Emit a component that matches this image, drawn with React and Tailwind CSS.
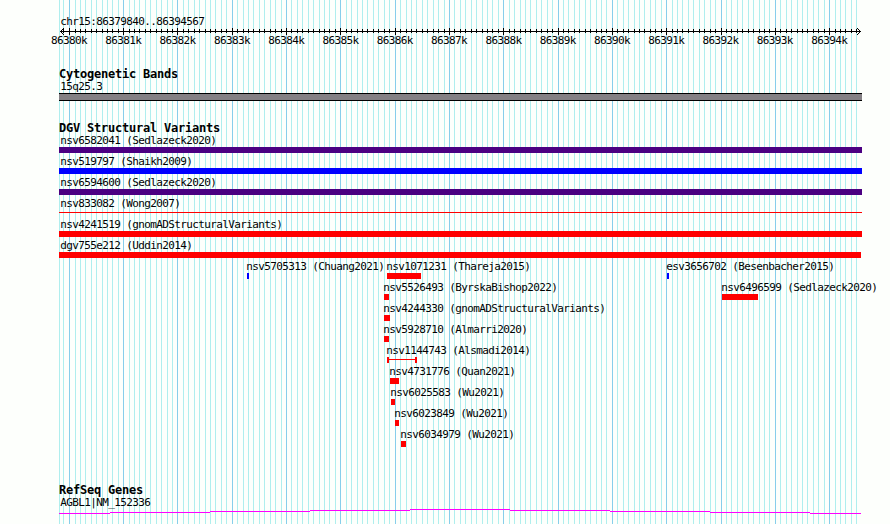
import React from 'react';

const LEFT = 59;
const ORIGIN = 69.29;
const STEP = 5.431;

// integer pixel column of the i-th 100bp tick, 1 and 6 round up
const tickX = (i) => Math.floor(ORIGIN + STEP * i) + (i === 1 || i === 6 ? 1 : 0);

const ticks = [{ x: 59, major: false }];
for (let i = -1; i <= 145; i++) {
    ticks.push({ x: tickX(i), major: i % 10 === 0 });
}

const scaleLabels = Array.from({ length: 15 }, (_, i) => `${86380 + i}k`);

const fullWidth = [
    { name: 'nsv6582041 (Sedlazeck2020)', bar: 'h-1.5 w-[803px] bg-[#4b0082]' },
    { name: 'nsv519797 (Shaikh2009)', bar: 'h-1.5 w-[803px] bg-[#0000ff]' },
    { name: 'nsv6594600 (Sedlazeck2020)', bar: 'h-1.5 w-[803px] bg-[#4b0082]' },
    { name: 'nsv833082 (Wong2007)', bar: 'mt-[2px] h-px w-[803px] bg-[#ff0000]' },
    { name: 'nsv4241519 (gnomADStructuralVariants)', bar: 'h-1.5 w-[803px] bg-[#ff0000]' },
    { name: 'dgv755e212 (Uddin2014)', bar: 'h-1.5 w-[802px] bg-[#ff0000]' },
];

// start / end are pixel columns on the ruler
const lanes = [
    [
        { name: 'nsv5705313 (Chuang2021)', start: 247, end: 249, loss: false },
        { name: 'nsv1071231 (Thareja2015)', start: 387, end: 421, loss: true },
        { name: 'esv3656702 (Besenbacher2015)', start: 667, end: 669, loss: false },
    ],
    [
        { name: 'nsv5526493 (ByrskaBishop2022)', start: 384, end: 389, loss: true },
        { name: 'nsv6496599 (Sedlazeck2020)', start: 722, end: 758, loss: true },
    ],
    [{ name: 'nsv4244330 (gnomADStructuralVariants)', start: 384, end: 390, loss: true }],
    [{ name: 'nsv5928710 (Almarri2020)', start: 384, end: 389, loss: true }],
    [{ name: 'nsv1144743 (Alsmadi2014)', start: 387, end: 417, loss: true, whisker: true }],
    [{ name: 'nsv4731776 (Quan2021)', start: 390, end: 399, loss: true }],
    [{ name: 'nsv6025583 (Wu2021)', start: 391, end: 395, loss: true }],
    [{ name: 'nsv6023849 (Wu2021)', start: 395, end: 399, loss: true }],
    [{ name: 'nsv6034979 (Wu2021)', start: 401, end: 406, loss: true }],
];

const geneSteps = [
    [59, 110, 513],
    [110, 210, 512],
    [210, 310, 511],
    [310, 410, 510],
    [410, 510, 509],
    [510, 610, 510],
    [610, 710, 511],
    [710, 810, 512],
    [810, 861, 513],
];

const GridLines = () => (
    <svg className="absolute inset-0 -z-10" width="890" height="524" shapeRendering="crispEdges">
        {ticks.map(({ x, major }) => (
            <rect key={x} x={x} y="0" width="1" height="524" fill={major ? '#87ceeb' : '#afeeee'} />
        ))}
    </svg>
);

const Ruler = () => (
    <svg className="block" width="890" height="8" viewBox="0 27 890 8" shapeRendering="crispEdges">
        <rect x="60" y="31" width="801" height="1" />
        {ticks.slice(1).map(({ x, major }) => (
            <rect key={x} x={x} y={major ? 28 : 29} width="1" height={major ? 7 : 4} />
        ))}
        {[1, 2, 3].map((d) => (
            <g key={d}>
                <rect x={60 + d} y={31 - d} width="1" height="1" />
                <rect x={60 + d} y={31 + d} width="1" height="1" />
                <rect x={860 - d} y={31 - d} width="1" height="1" />
                <rect x={860 - d} y={31 + d} width="1" height="1" />
            </g>
        ))}
    </svg>
);

const Heading = ({ children }) => (
    <h2 className="pl-[59px] h-3 text-[12px] leading-3 font-bold tracking-[-0.225px]">{children}</h2>
);

const Variant = ({ item, offset }) => (
    <div className="shrink-0 w-0" style={{ marginLeft: offset }}>
        <div className="-ml-[0.7px] h-3">{item.name}</div>
        {item.whisker ? (
            <div className="flex h-1.5 w-[30px] items-start justify-between border-x-2 border-[#ff0000]">
                <div className="mt-[2px] h-px w-full bg-[#ff0000]" />
            </div>
        ) : (
            <div
                className={item.loss ? 'h-1.5 bg-[#ff0000]' : 'h-1.5 bg-[#0000ff]'}
                style={{ width: item.end - item.start }}
            />
        )}
    </div>
);

const App = () => {
    return (
        <div className="relative isolate w-[890px] h-[524px] overflow-hidden bg-[#fdfffc] text-black whitespace-pre font-['DejaVu_Sans_Mono',monospace] text-[11px] leading-3 tracking-[-0.622px]">
            <GridLines />

            <div className="pt-4 pl-[60.3px] h-[27px]">chr15:86379840..86394567</div>
            <Ruler />
            <div className="flex pl-[51px] h-[33px]">
                {scaleLabels.map((label) => (
                    <span key={label} className="w-[54.3px] shrink-0">{label}</span>
                ))}
            </div>

            {/* Cytogenetic bands */}
            <Heading>Cytogenetic Bands</Heading>
            <div className="pl-[60.3px] pt-px h-[13px]">15q25.3</div>
            <div className="ml-[59px] w-[803px] h-2 border-y border-black bg-[#848084]" />

            {/* Structural variants */}
            <div className="pt-[21px]">
                <Heading>DGV Structural Variants</Heading>
                <div className="pt-[1px]">
                    {fullWidth.map((item) => (
                        <div key={item.name} className="h-[21px] pl-[59px]">
                            <div className="h-3 pl-[1.3px]">{item.name}</div>
                            <div className={item.bar} />
                        </div>
                    ))}
                    {lanes.map((lane) => (
                        <div key={lane[0].name} className="flex h-[21px] pl-[59px]">
                            {lane.map((item, i) => (
                                <Variant
                                    key={item.name}
                                    item={item}
                                    offset={item.start - (i ? lane[i - 1].start : LEFT)}
                                />
                            ))}
                        </div>
                    ))}
                </div>
            </div>

            {/* Genes */}
            <div className="pt-[34px]">
                <Heading>RefSeq Genes</Heading>
                <div className="pl-[60.3px] pt-px h-[13px]">AGBL1|NM_152336</div>
                <svg className="block" width="890" height="8" viewBox="0 509 890 8" shapeRendering="crispEdges">
                    {geneSteps.map(([from, to, y]) => (
                        <rect key={from} x={from} y={y} width={to - from} height="1" fill="#ff00ff" />
                    ))}
                </svg>
            </div>
        </div>
    );
};

export default App;
